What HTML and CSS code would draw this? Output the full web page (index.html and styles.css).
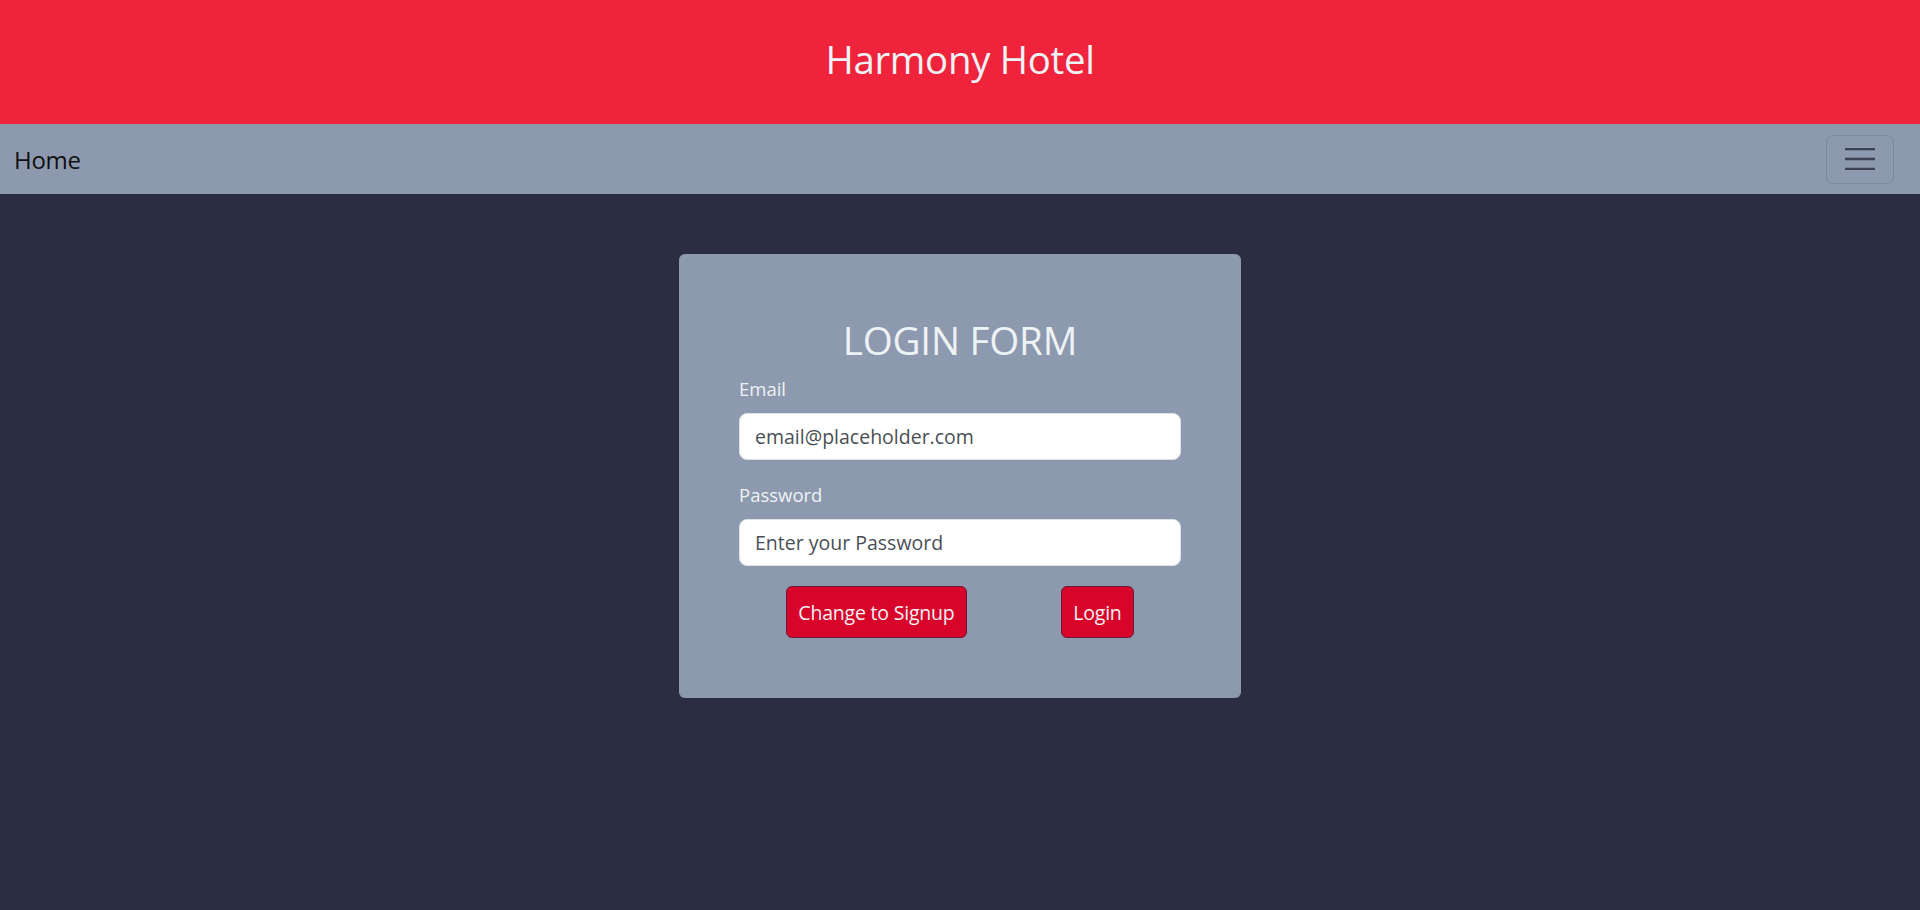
FILE: index.html
```html
<!DOCTYPE html>
<html lang="en">
<head>
<meta charset="utf-8">
<title>Harmony Hotel</title>
<link rel="stylesheet" href="styles.css">
</head>
<body>
<header class="site-header">
  <h1 class="site-title">Harmony Hotel</h1>
</header>
<nav class="navbar">
  <a class="nav-brand" href="#">Home</a>
  <button class="nav-toggler" type="button" aria-label="Toggle navigation">
    <svg width="30" height="22" viewBox="0 0 30 22" aria-hidden="true">
      <path d="M0 1h30M0 11h30M0 21h30" stroke="#3b4250" stroke-width="2.4" stroke-linecap="round"/>
    </svg>
  </button>
</nav>
<main class="main">
  <form class="login-card">
    <h2 class="login-title">LOGIN FORM</h2>
    <div class="field">
      <label class="field-label" for="email">Email</label>
      <input class="field-input" id="email" type="email" placeholder="email@placeholder.com">
    </div>
    <div class="field">
      <label class="field-label" for="password">Password</label>
      <input class="field-input" id="password" type="password" placeholder="Enter your Password">
    </div>
    <div class="actions">
      <button class="btn" type="button">Change to Signup</button>
      <button class="btn" type="submit">Login</button>
    </div>
  </form>
</main>
</body>
</html>
```

FILE: styles.css
```css
* { box-sizing: border-box; }
html, body { margin: 0; padding: 0; }
body {
  background: #2b2d42;
  font-family: "Open Sans", "Noto Sans", sans-serif;
  min-height: 910px;
}
.site-header {
  background: #ef233c;
  height: 124px;
  display: flex;
  align-items: center;
  justify-content: center;
  padding-bottom: 6px;
}
.site-title {
  margin: 0;
  color: #edf2f4;
  font-weight: 400;
  font-size: 38.4px;
  line-height: 1;
  letter-spacing: -0.3px;
}
.navbar {
  background: #8d99ae;
  height: 70px;
  display: flex;
  align-items: center;
  justify-content: space-between;
  padding: 0 26px 0 14px;
}
.nav-brand {
  color: #111;
  text-decoration: none;
  font-size: 24px;
  letter-spacing: -0.3px;
}
.nav-toggler {
  width: 68px;
  height: 49px;
  border: 1px solid rgba(43, 45, 66, 0.15);
  border-radius: 7px;
  background: transparent;
  display: flex;
  align-items: center;
  justify-content: center;
  padding: 0;
}
.main {
  padding-top: 60px;
  display: flex;
  justify-content: center;
}
.login-card {
  width: 562px;
  height: 444px;
  background: #8d99ae;
  border-radius: 6px;
  padding: 62px 60px 58px;
  display: flex;
  flex-direction: column;
}
.login-title {
  margin: 0 0 14px;
  text-align: center;
  color: #edf2f4;
  font-weight: 400;
  font-size: 38.6px;
  line-height: 48px;
  letter-spacing: -0.2px;
}
.field { margin-bottom: 24px; }
.field + .field { margin-bottom: 20px; }
.field-label {
  display: block;
  color: #edf2f4;
  font-size: 18.5px;
  line-height: 22px;
  margin-bottom: 13px;
}
.field-input {
  display: block;
  width: 100%;
  height: 47px;
  padding: 0 15px;
  font-family: inherit;
  font-size: 19.5px;
  color: #4a4f55;
  background: #fff;
  border: 1px solid #dee2e6;
  border-radius: 8px;
  outline: none;
}
.field-input::placeholder { color: #4a4f55; opacity: 1; }
.actions {
  display: flex;
  justify-content: space-around;
}
.btn {
  height: 52px;
  padding: 0 11px;
  background: #d90429;
  color: #edf2f4;
  border: 1px solid #6b1a35;
  border-radius: 6px;
  font-family: inherit;
  font-size: 19.5px;
  letter-spacing: -0.2px;
}
```
